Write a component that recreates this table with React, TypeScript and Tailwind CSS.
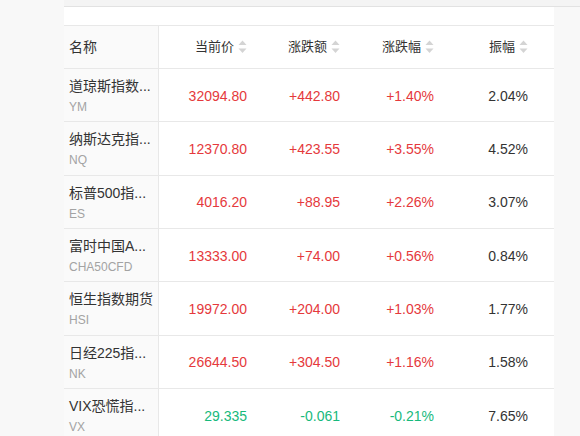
import React from 'react';

type Row = {
  name: string;
  code: string;
  price: string;
  change: string;
  pct: string;
  amp: string;
  up: boolean;
};

const rows: Row[] = [
  { name: '道琼斯指数...', code: 'YM', price: '32094.80', change: '+442.80', pct: '+1.40%', amp: '2.04%', up: true },
  { name: '纳斯达克指...', code: 'NQ', price: '12370.80', change: '+423.55', pct: '+3.55%', amp: '4.52%', up: true },
  { name: '标普500指...', code: 'ES', price: '4016.20', change: '+88.95', pct: '+2.26%', amp: '3.07%', up: true },
  { name: '富时中国A...', code: 'CHA50CFD', price: '13333.00', change: '+74.00', pct: '+0.56%', amp: '0.84%', up: true },
  { name: '恒生指数期货', code: 'HSI', price: '19972.00', change: '+204.00', pct: '+1.03%', amp: '1.77%', up: true },
  { name: '日经225指...', code: 'NK', price: '26644.50', change: '+304.50', pct: '+1.16%', amp: '1.58%', up: true },
  { name: 'VIX恐慌指...', code: 'VX', price: '29.335', change: '-0.061', pct: '-0.21%', amp: '7.65%', up: false },
];

const grid = 'grid grid-cols-[95px_114px_93px_94px_94px]';

const SortIcon = () => (
  <svg width="9" height="14" viewBox="0 0 9 14" className="ml-[4px]">
    <path d="M4.5 0.5 L8.5 5 L0.5 5 Z" fill="#d4d4d4" />
    <path d="M0.5 8.5 L8.5 8.5 L4.5 13 Z" fill="#d4d4d4" />
  </svg>
);

const HeadCell = ({ label }: { label: string }) => (
  <div className="flex items-center justify-end pr-[26px] text-[13px] text-[#333]">
    <span>{label}</span>
    <SortIcon />
  </div>
);

export default function App() {
  return (
    <div
      className="min-h-[436px] w-[580px] bg-[#f8f8f8] pl-[64px]"
      style={{ fontFamily: '"Liberation Sans", "Noto Sans CJK SC", sans-serif' }}
    >
      <div className="h-[7px] border-b border-[#e2e2e2] bg-[#f4f4f4]" />
      <div className="w-[490px] bg-white">
        <div className="h-[19px] border-b border-[#e8e8e8]" />
        <div className={`${grid} h-[43px] border-b border-[#e8e8e8]`}>
          <div className="flex items-center border-r border-[#e8e8e8] bg-[#fafafa] pl-[5px] text-[14px] text-[#333]">
            名称
          </div>
          <HeadCell label="当前价" />
          <HeadCell label="涨跌额" />
          <HeadCell label="涨跌幅" />
          <HeadCell label="振幅" />
        </div>
        {rows.map((r) => {
          const color = r.up ? 'text-[#e5393c]' : 'text-[#17b97c]';
          return (
            <div key={r.code} className={`${grid} h-[53.33px] border-b border-[#e8e8e8]`}>
              <div className="flex flex-col border-r border-[#e8e8e8] bg-[#fafafa] pl-[5px] pt-[7px]">
                <div className="text-[14px] leading-[20px] text-[#333] whitespace-nowrap">{r.name}</div>
                <div className="text-[12px] leading-[22px] text-[#a3a3a3]">{r.code}</div>
              </div>
              <div className={`flex items-center justify-end pr-[26px] pt-[2px] text-[14px] ${color}`}>{r.price}</div>
              <div className={`flex items-center justify-end pr-[26px] pt-[2px] text-[14px] ${color}`}>{r.change}</div>
              <div className={`flex items-center justify-end pr-[26px] pt-[2px] text-[14px] ${color}`}>{r.pct}</div>
              <div className="flex items-center justify-end pr-[26px] pt-[2px] text-[14px] text-[#333]">{r.amp}</div>
            </div>
          );
        })}
      </div>
    </div>
  );
}
